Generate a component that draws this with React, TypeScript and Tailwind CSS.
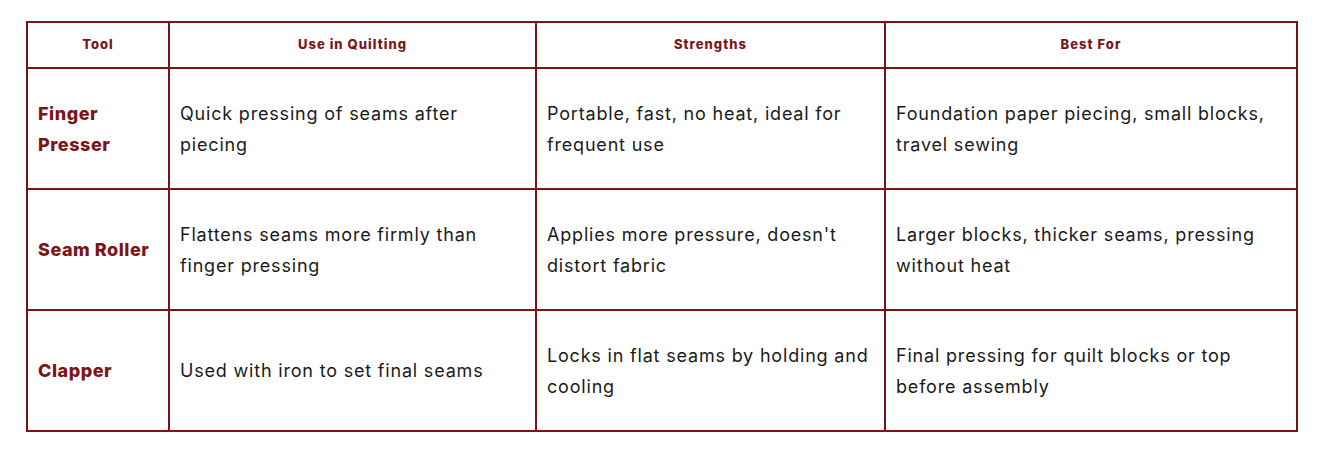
const rows = [
  {
    tool: "Finger Presser",
    use: "Quick pressing of seams after piecing",
    strengths: "Portable, fast, no heat, ideal for frequent use",
    best: "Foundation paper piecing, small blocks, travel sewing",
  },
  {
    tool: "Seam Roller",
    use: "Flattens seams more firmly than finger pressing",
    strengths: "Applies more pressure, doesn't distort fabric",
    best: "Larger blocks, thicker seams, pressing without heat",
  },
  {
    tool: "Clapper",
    use: "Used with iron to set final seams",
    strengths: "Locks in flat seams by holding and cooling",
    best: "Final pressing for quilt blocks or top before assembly",
  },
];

const cell =
  "border-2 border-[#7c1416] pl-[10px] pr-[12px] align-middle text-[18px] leading-[31px] tracking-[0.045em] text-[#1a1a1a]";

const App = () => {
  return (
    <div className="bg-white min-h-[453px] pt-[21px] pl-[26px] font-['Inter','Noto_Sans',sans-serif]">
      <table className="w-[1270px] table-fixed border-collapse border-2 border-[#7c1416]">
        <colgroup>
          <col className="w-[142px]" />
          <col className="w-[367px]" />
          <col className="w-[349px]" />
          <col className="w-[412px]" />
        </colgroup>
        <thead>
          <tr className="h-[46px]">
            {["Tool", "Use in Quilting", "Strengths", "Best For"].map((h) => (
              <th
                key={h}
                className="border-2 border-[#7c1416] text-center text-[13px] font-extrabold tracking-[0.08em] text-[#7c1416] px-3"
              >
                {h}
              </th>
            ))}
          </tr>
        </thead>
        <tbody>
          {rows.map((r) => (
            <tr key={r.tool} className="h-[121px]">
              <td className="border-2 border-[#7c1416] pl-[10px] pr-[8px] align-middle text-[18px] leading-[31px] font-extrabold tracking-[0.03em] text-[#7c1416]">
                {r.tool}
              </td>
              <td className={cell}>{r.use}</td>
              <td className={cell}>{r.strengths}</td>
              <td className={cell}>{r.best}</td>
            </tr>
          ))}
        </tbody>
      </table>
    </div>
  );
};

export default App;
